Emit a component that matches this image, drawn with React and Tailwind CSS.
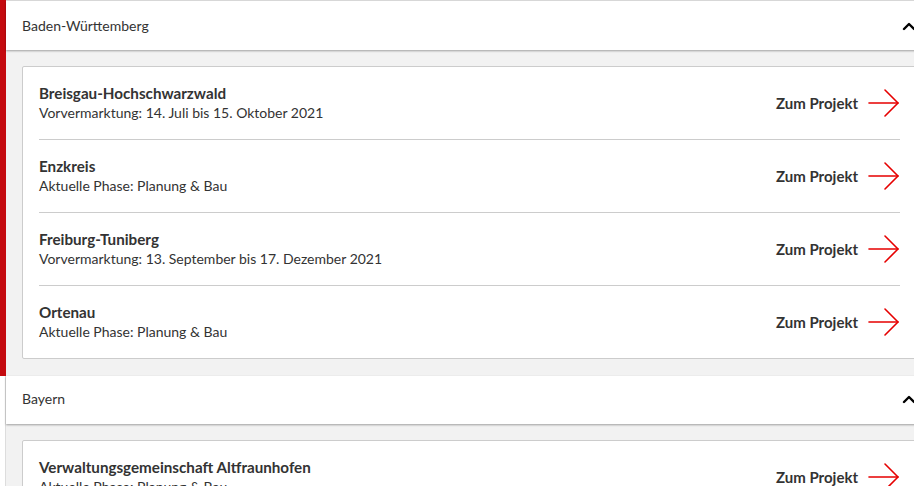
import React from "react";

const Arrow = () => (
  <svg width="32" height="28" viewBox="0 0 32 28" fill="none" stroke="#e60000" strokeWidth="1.6" strokeLinecap="round" strokeLinejoin="round">
    <path d="M1 14H30" />
    <path d="M17 1L30 14L17 27" />
  </svg>
);

const Chevron = () => (
  <svg width="14" height="10" viewBox="0 0 14 10" fill="none" stroke="#000" strokeWidth="2.4" strokeLinecap="round" strokeLinejoin="round">
    <path d="M2 8L7 3L12 8" />
  </svg>
);

const Row = ({ title, sub, last }) => (
  <div className={"flex items-center justify-between " + (last ? "h-[72px]" : "h-[73px] border-b border-[#cccccc]")}>
    <div className="flex flex-col">
      <div className="text-[15.2px] font-bold text-[#333] leading-[20px]">{title}</div>
      <div className="text-[14px] text-[#333] leading-[20px]">{sub}</div>
    </div>
    <div className="flex items-center gap-[10px]">
      <span className="text-[15px] font-bold text-[#333]">Zum Projekt</span>
      <Arrow />
    </div>
  </div>
);

const Header = ({ label, h }) => (
  <div className={"relative z-10 flex items-center justify-between bg-white pl-[16px] pr-[2px] shadow-[0_1px_2px_rgba(0,0,0,0.35)] " + h}>
    <span className="text-[14px] text-[#333]">{label}</span>
    <Chevron />
  </div>
);

export default function App() {
  const bw = [
    ["Breisgau-Hochschwarzwald", "Vorvermarktung: 14. Juli bis 15. Oktober 2021"],
    ["Enzkreis", "Aktuelle Phase: Planung & Bau"],
    ["Freiburg-Tuniberg", "Vorvermarktung: 13. September bis 17. Dezember 2021"],
    ["Ortenau", "Aktuelle Phase: Planung & Bau"],
  ];
  return (
    <div className="w-[914px] h-[486px] overflow-hidden bg-white" style={{ fontFamily: 'Lato, "Noto Sans", sans-serif' }}>
      <div className="bg-[#c40a0f] pl-[6px]">
        <div className="w-[912px] bg-[#f2f2f2] border-t border-[#dddddd]">
          <Header label="Baden-Württemberg" h="h-[49px]" />
          <div className="pt-[16px] pb-[17px] pl-[16px]">
            <div className="bg-white border border-[#cccccc] rounded-[2px] pl-[16px] pr-[17px]">
              {bw.map((r, i) => (
                <Row key={r[0]} title={r[0]} sub={r[1]} last={i === bw.length - 1} />
              ))}
            </div>
          </div>
        </div>
      </div>
      <div className="pl-[5px]">
        <div className="w-[913px] bg-[#f2f2f2] border-l border-[#dddddd]">
          <Header label="Bayern" h="h-[48px] pb-[3px]" />
          <div className="pt-[16px] pl-[16px]">
            <div className="bg-white border border-[#cccccc] rounded-[2px] pl-[16px] pr-[17px]">
              <Row title="Verwaltungsgemeinschaft Altfraunhofen" sub="Aktuelle Phase: Planung & Bau" last />
            </div>
          </div>
        </div>
      </div>
    </div>
  );
}
